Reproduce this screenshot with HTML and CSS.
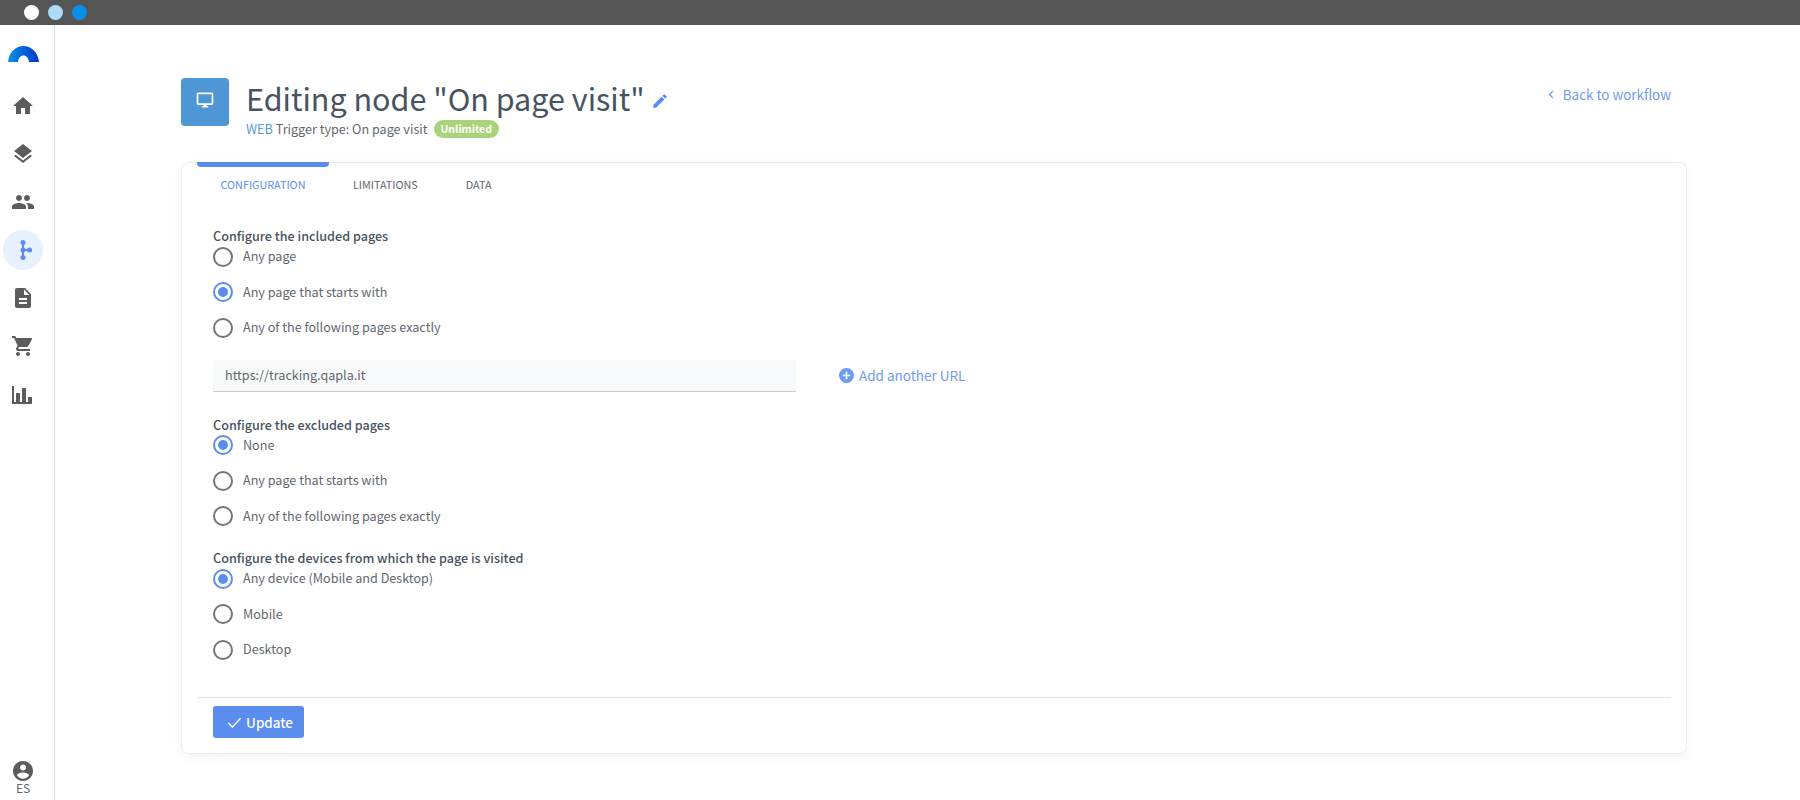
FILE: index.html
```html
<!DOCTYPE html>
<html lang="en">
<head>
<meta charset="utf-8">
<title>Editing node</title>
<link rel="stylesheet" href="styles.css">
</head>
<body>
<div class="topbar">
  <span class="dot dot-white"></span><span class="dot dot-light"></span><span class="dot dot-blue"></span>
</div>
<div class="app">
  <nav class="sidebar">
    <svg class="logo" viewBox="0 0 31 16" width="31" height="16"><defs><linearGradient id="lg" x1="0" x2="1" y1="0" y2="0"><stop offset="0" stop-color="#0a8fe8"/><stop offset="1" stop-color="#0038c8"/></linearGradient></defs><path d="M0 16C1 6 8 0 15.500 0S30 6 31 16H21C20.500 12 18.500 9.500 15.500 9.500S10.500 12 10 16Z" fill="url(#lg)"/></svg>
    <div class="nav-list">
      <span class="nav-item"><svg viewBox="0 0 24 24" width="24" height="24"><path d="M10 20v-6h4v6h5v-8h3L12 3 2 12h3v8z"/></svg></span>
      <span class="nav-item"><svg viewBox="0 0 24 24" width="24" height="24"><path d="M11.990 18.540l-7.370-5.730L3 14.070l9 7 9-7-1.630-1.270zM12 16l7.360-5.730L21 9l-9-7-9 7 1.630 1.270z"/></svg></span>
      <span class="nav-item"><svg viewBox="0 0 24 24" width="24" height="24"><path d="M16 11c1.660 0 2.990-1.340 2.990-3S17.660 5 16 5s-3 1.340-3 3 1.340 3 3 3zm-8 0c1.660 0 2.990-1.340 2.990-3S9.660 5 8 5 5 6.340 5 8s1.340 3 3 3zm0 2c-2.330 0-7 1.170-7 3.500V19h14v-2.500C15 14.170 10.330 13 8 13zm8 0c-.29 0-.62.020-.97.050 1.160.84 1.970 1.970 1.970 3.450V19h6v-2.500c0-2.330-4.670-3.500-7-3.500z"/></svg></span>
      <span class="nav-item nav-active"><svg viewBox="0 0 24 24" width="24" height="24"><path d="M11 5h2v14h-2zM12 11h7v2h-7z"/><circle cx="12" cy="4.500" r="2.500"/><circle cx="12" cy="12" r="2.500"/><circle cx="12" cy="19.500" r="2.500"/><circle cx="18.500" cy="12" r="2.500"/></svg></span>
      <span class="nav-item"><svg viewBox="0 0 24 24" width="24" height="24"><path d="M14 2H6c-1.100 0-2 .9-2 2v16c0 1.100.9 2 2 2h12c1.100 0 2-.9 2-2V8l-6-6zm2 16H8v-2h8v2zm0-4H8v-2h8v2zm-3-5V3.500L18.500 9H13z"/></svg></span>
      <span class="nav-item"><svg viewBox="0 0 24 24" width="24" height="24"><path d="M7 18c-1.100 0-1.990.9-1.990 2S5.900 22 7 22s2-.9 2-2-.9-2-2-2zM1 2v2h2l3.600 7.590-1.350 2.450c-.16.28-.25.610-.25.960 0 1.100.9 2 2 2h12v-2H7.420c-.14 0-.25-.11-.25-.25l.03-.12.900-1.630h7.450c.75 0 1.410-.41 1.750-1.030l3.580-6.490A1 1 0 0 0 20 4H5.210l-.94-2H1zm16 16c-1.100 0-1.990.9-1.990 2s.89 2 1.990 2 2-.9 2-2-.9-2-2-2z"/></svg></span>
      <span class="nav-item"><svg viewBox="0 0 24 24" width="24" height="24"><path d="M1 4h2v16h18v2H1zM5 11h4v9H5zM11 6h4v14h-4zM17 15h4v5h-4z"/></svg></span>
    </div>
    <div class="user">
      <svg viewBox="0 0 24 24" width="24" height="24"><path d="M12 2C6.480 2 2 6.480 2 12s4.480 10 10 10 10-4.480 10-10S17.520 2 12 2zm0 3.500c1.660 0 3 1.340 3 3s-1.340 3-3 3-3-1.340-3-3 1.340-3 3-3zm0 14.200c-2.500 0-4.710-1.280-6-3.220.03-1.990 4-3.080 6-3.080s5.970 1.090 6 3.080c-1.290 1.940-3.500 3.220-6 3.220z"/></svg>
      <span class="user-lang">ES</span>
    </div>
  </nav>
  <main class="content">
    <header class="page-head">
      <div class="head-left">
        <span class="node-icon"><svg viewBox="0 0 24 24" width="20" height="20"><path d="M20 3H4c-1.100 0-2 .9-2 2v11c0 1.100.9 2 2 2h6v1.500H8V21h8v-1.500h-2V18h6c1.100 0 2-.9 2-2V5c0-1.100-.9-2-2-2zm0 13H4V5h16z" fill="#fff"/></svg></span>
        <div class="head-text">
          <div class="title-row">
            <h1 class="title">Editing node "On page visit"</h1>
            <svg class="edit-icon" viewBox="0 0 24 24" width="18" height="18"><path d="M3 17.250V21h3.750L17.810 9.940l-3.750-3.750zM20.710 7.040a1 1 0 0 0 0-1.410l-2.340-2.340a1 1 0 0 0-1.410 0l-1.830 1.830 3.750 3.750z"/></svg>
          </div>
          <div class="subtitle"><span class="web">WEB</span><span>Trigger type: On page visit</span><span class="badge">Unlimited</span></div>
        </div>
      </div>
      <a class="back-link"><svg viewBox="0 0 8 12" width="6" height="9"><path d="M6.500 1.500L2 6l4.500 4.500" fill="none" stroke="currentColor" stroke-width="1.800"/></svg>Back to workflow</a>
    </header>
    <section class="card">
      <div class="tabs">
        <span class="tab tab-active">CONFIGURATION</span>
        <span class="tab tab-second">LIMITATIONS</span>
        <span class="tab tab-third">DATA</span>
      </div>
      <form class="config">
        <div class="group">
          <div class="group-title">Configure the included pages</div>
          <label class="radio-row"><span class="radio"></span><span class="radio-text">Any page</span></label>
          <label class="radio-row"><span class="radio radio-on"></span><span class="radio-text">Any page that starts with</span></label>
          <label class="radio-row"><span class="radio"></span><span class="radio-text">Any of the following pages exactly</span></label>
        </div>
        <div class="url-row">
          <div class="url-input">https://tracking.qapla.it</div>
          <a class="add-url"><svg viewBox="0 0 16 16" width="15" height="15"><circle cx="8" cy="8" r="8" fill="currentColor"/><path d="M8 4v8M4 8h8" stroke="#fff" stroke-width="1.800"/></svg>Add another URL</a>
        </div>
        <div class="group group-second">
          <div class="group-title">Configure the excluded pages</div>
          <label class="radio-row"><span class="radio radio-on"></span><span class="radio-text">None</span></label>
          <label class="radio-row"><span class="radio"></span><span class="radio-text">Any page that starts with</span></label>
          <label class="radio-row"><span class="radio"></span><span class="radio-text">Any of the following pages exactly</span></label>
        </div>
        <div class="group group-third">
          <div class="group-title">Configure the devices from which the page is visited</div>
          <label class="radio-row"><span class="radio radio-on"></span><span class="radio-text">Any device (Mobile and Desktop)</span></label>
          <label class="radio-row"><span class="radio"></span><span class="radio-text">Mobile</span></label>
          <label class="radio-row"><span class="radio"></span><span class="radio-text">Desktop</span></label>
        </div>
      </form>
      <div class="card-foot">
        <button class="update-btn" type="button"><svg viewBox="0 0 16 16" width="15" height="15"><path d="M1.500 8.500l4.200 4.200L14.500 3.500" fill="none" stroke="#fff" stroke-width="1.500"/></svg>Update</button>
      </div>
    </section>
  </main>
</div>
</body>
</html>
```
FILE: styles.css
```css
* { box-sizing: border-box; }
html, body { margin: 0; height: 100%; }
body {
  width: 1800px;
  height: 800px;
  overflow: hidden;
  background: #fff;
  color: #5f6770;
  font-family: "Noto Sans CJK SC", "Noto Sans", sans-serif;
  font-size: 12.600px;
  display: flex;
  flex-direction: column;
}
.topbar {
  height: 25px;
  flex: none;
  background: #555;
  display: flex;
  align-items: center;
  gap: 9px;
  padding-left: 24px;
}
.dot { width: 15px; height: 15px; border-radius: 50%; }
.dot-white { background: #fff; }
.dot-light { background: #aedcf8; }
.dot-blue { background: #0791e8; }
.app { flex: 1; display: flex; min-height: 0; }
.sidebar {
  width: 55px;
  flex: none;
  border-right: 1px solid #dcdcdc;
  display: flex;
  flex-direction: column;
  padding-top: 21px;
}
.logo { margin-left: 8px; display: block; }
.nav-list {
  margin-top: 24px;
  margin-left: 3px;
  display: flex;
  flex-direction: column;
  gap: 8px;
}
.nav-item {
  width: 40px;
  height: 40px;
  border-radius: 50%;
  display: flex;
  align-items: center;
  justify-content: center;
  fill: #5c5c5c;
}
.nav-active { background: #e6f1fd; fill: #5b8def; }
.user {
  margin-top: auto;
  padding-bottom: 5px;
  display: flex;
  flex-direction: column;
  align-items: center;
  fill: #5c5c5c;
  width: 46px;
}
.user svg { display: block; margin-bottom: -3px; }
.user-lang { font-size: 12px; line-height: 15px; color: #5f6770; }
.content { flex: 1; padding: 53px 113px 0 126px; min-width: 0; }
.page-head {
  height: 84px;
  display: flex;
  justify-content: space-between;
  align-items: flex-start;
}
.head-left { display: flex; gap: 17px; }
.node-icon {
  width: 48px;
  height: 48px;
  border-radius: 4px;
  background: #4e96d4;
  display: flex;
  align-items: center;
  justify-content: center;
}
.node-icon svg { margin-top: -4px; }
.title-row { display: flex; align-items: center; gap: 6px; height: 40px; }
.title {
  margin: 0;
  font-size: 30.500px;
  font-weight: 400;
  line-height: 40px;
  color: #47535f;
}
.edit-icon { fill: #5b8def; margin-top: 6px; }
.subtitle { font-size: 12.600px; line-height: 18px; margin-top: 2px; color: #5f6770; display: flex; align-items: center; gap: 3px; }
.web { color: #5b9bd5; }
.badge {
  margin-left: 3px;
  background: #a9d37a;
  color: #fff;
  font-size: 10.500px;
  font-weight: 700;
  line-height: 18px;
  height: 18px;
  padding: 0 7px;
  border-radius: 9px;
}
.back-link {
  display: flex;
  align-items: center;
  gap: 9px;
  color: #6b9cee;
  font-size: 13.450px;
  line-height: 20px;
  margin: 6px 16px 0 0;
}
.card {
  height: 592px;
  border: 1px solid #ececec;
  border-radius: 8px;
  box-shadow: 0 3px 10px rgba(0,0,0,.05);
  padding: 0 15px;
  display: flex;
  flex-direction: column;
}
.tabs { display: flex; height: 42px; font-size: 10.800px; }
.tab { height: 42px; line-height: 34px; padding-top: 4px; color: #5f6770; }
.tab-active {
  width: 132px;
  text-align: center;
  color: #5b8def;
  position: relative;
}
.tab-active::before {
  content: "";
  position: absolute;
  left: 0;
  right: 0;
  top: -1px;
  height: 5px;
  background: #5b8def;
  border-radius: 0 0 4px 4px;
}
.tab-second { margin-left: 24px; }
.tab-third { margin-left: 48px; }
.config { padding: 21px 16px 0; flex: 1; }
.group-title { font-size: 12.600px; font-weight: 500; line-height: 20px; color: #47535f; }
.radio-row {
  display: flex;
  align-items: center;
  gap: 10px;
  height: 35.500px;
  font-size: 12.600px;
  color: #5f6770;
}
.radio-text { margin-top: -2px; }
.group > .group-title + .radio-row { margin-top: -7px; }
.radio {
  width: 20px;
  height: 20px;
  border: 2px solid #757575;
  border-radius: 50%;
  flex: none;
  display: flex;
  align-items: center;
  justify-content: center;
}
.radio-on { border-color: #5b8def; }
.radio-on::after {
  content: "";
  width: 10px;
  height: 10px;
  background: #5b8def;
  border-radius: 50%;
}
.url-row { display: flex; align-items: center; gap: 43px; margin-top: 14px; }
.url-input {
  width: 583px;
  height: 32px;
  background: #f8f9fb;
  border-bottom: 1px solid #c9ccd1;
  padding-left: 12px;
  line-height: 29px;
  font-size: 12.600px;
}
.add-url { display: flex; align-items: center; gap: 5px; color: #6b9cee; font-size: 13.500px; margin-top: -1px; }
.group-second { margin-top: 23px; }
.group-third { margin-top: 14px; }
.card-foot { border-top: 1px solid #e3e3e3; padding: 8px 16px 15px; }
.update-btn {
  width: 91px;
  height: 32px;
  border: 0;
  border-radius: 3px;
  background: #5b8def;
  color: #fff;
  font: 500 13.400px "Noto Sans CJK SC", "Noto Sans", sans-serif;
  display: flex;
  align-items: center;
  justify-content: center;
  gap: 4px;
  padding: 0 0 0 3px;
}
```
